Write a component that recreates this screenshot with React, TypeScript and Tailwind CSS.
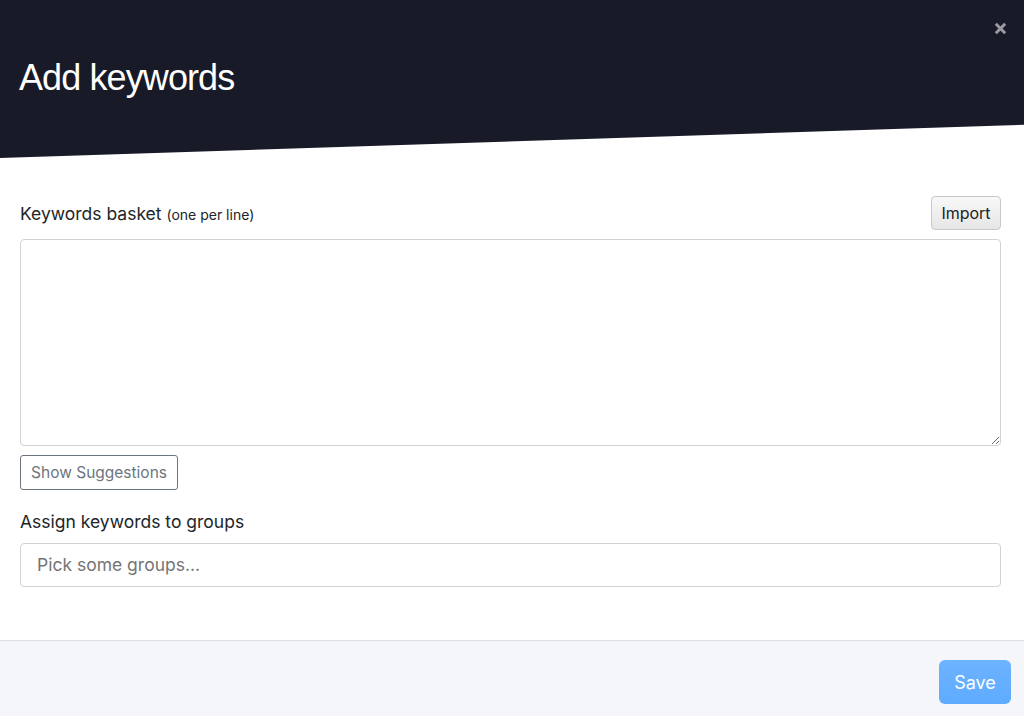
import React from 'react';

export default function App() {
    return (
        <div
            className="w-[1024px] h-[716px] bg-white flex flex-col overflow-hidden text-[#212529]"
            style={{ fontFamily: 'Inter, "Liberation Sans", Arial, sans-serif' }}
        >
            {/* Slanted header */}
            <div className="relative h-[158px] shrink-0 bg-[#181a28] [clip-path:polygon(0_0,100%_0,100%_79%,0_100%)]">
                <h1
                    className="pt-[57px] pl-[19px] text-[36px] leading-[42px] font-normal text-white tracking-[-0.9px]"
                    style={{ fontFamily: '"Liberation Sans", Arial, sans-serif' }}
                >
                    Add keywords
                </h1>
                <button className="absolute right-[15px] top-[17px] w-[17px] h-[22px] flex items-center justify-center">
                    <svg viewBox="0 0 16 16" className="w-[15px] h-[15px]">
                        <path d="M3 3 L13 13 M13 3 L3 13" stroke="#9a9ba2" strokeWidth="3.2" strokeLinecap="butt" />
                    </svg>
                </button>
            </div>

            {/* Body */}
            <div className="flex-1 pl-[20px] pr-[23px] pt-[38px] flex flex-col">
                <div className="flex items-end justify-between h-[34px]">
                    <label className="text-[17.5px] leading-[24px] pb-[3px]">
                        Keywords basket <span className="text-[14px]">(one per line)</span>
                    </label>
                    <button className="h-[34px] w-[70px] text-[16px] rounded-[4px] border border-[#c8c8c8] bg-gradient-to-b from-[#f8f8f8] to-[#e6e6e6] text-[#222]">
                        Import
                    </button>
                </div>
                <textarea className="mt-[9px] h-[207px] border border-[#cfd3d8] rounded-[4px] resize-y outline-none p-2" />
                <div className="mt-[9px]">
                    <button className="h-[35px] w-[158px] text-[15.5px] text-[#6c757d] border border-[#6c757d] rounded-[3px] bg-white">
                        Show Suggestions
                    </button>
                </div>
                <div className="mt-[20px] text-[17.5px] leading-[24px]">Assign keywords to groups</div>
                <div className="mt-[9px] h-[44px] border border-[#cfd3d8] rounded-[4px] flex items-center pl-[16px] text-[17.5px] text-[#757575]">
                    Pick some groups...
                </div>
            </div>

            {/* Footer */}
            <div className="h-[76px] shrink-0 border-t border-[#dcdfe4] bg-[#f4f6fa] flex items-start justify-end pt-[19px] pr-[13px]">
                <button className="w-[72px] h-[44px] rounded-[6px] text-white text-[18px] bg-gradient-to-b from-[#6db3ff] to-[#5eabff]">
                    Save
                </button>
            </div>
        </div>
    );
}
